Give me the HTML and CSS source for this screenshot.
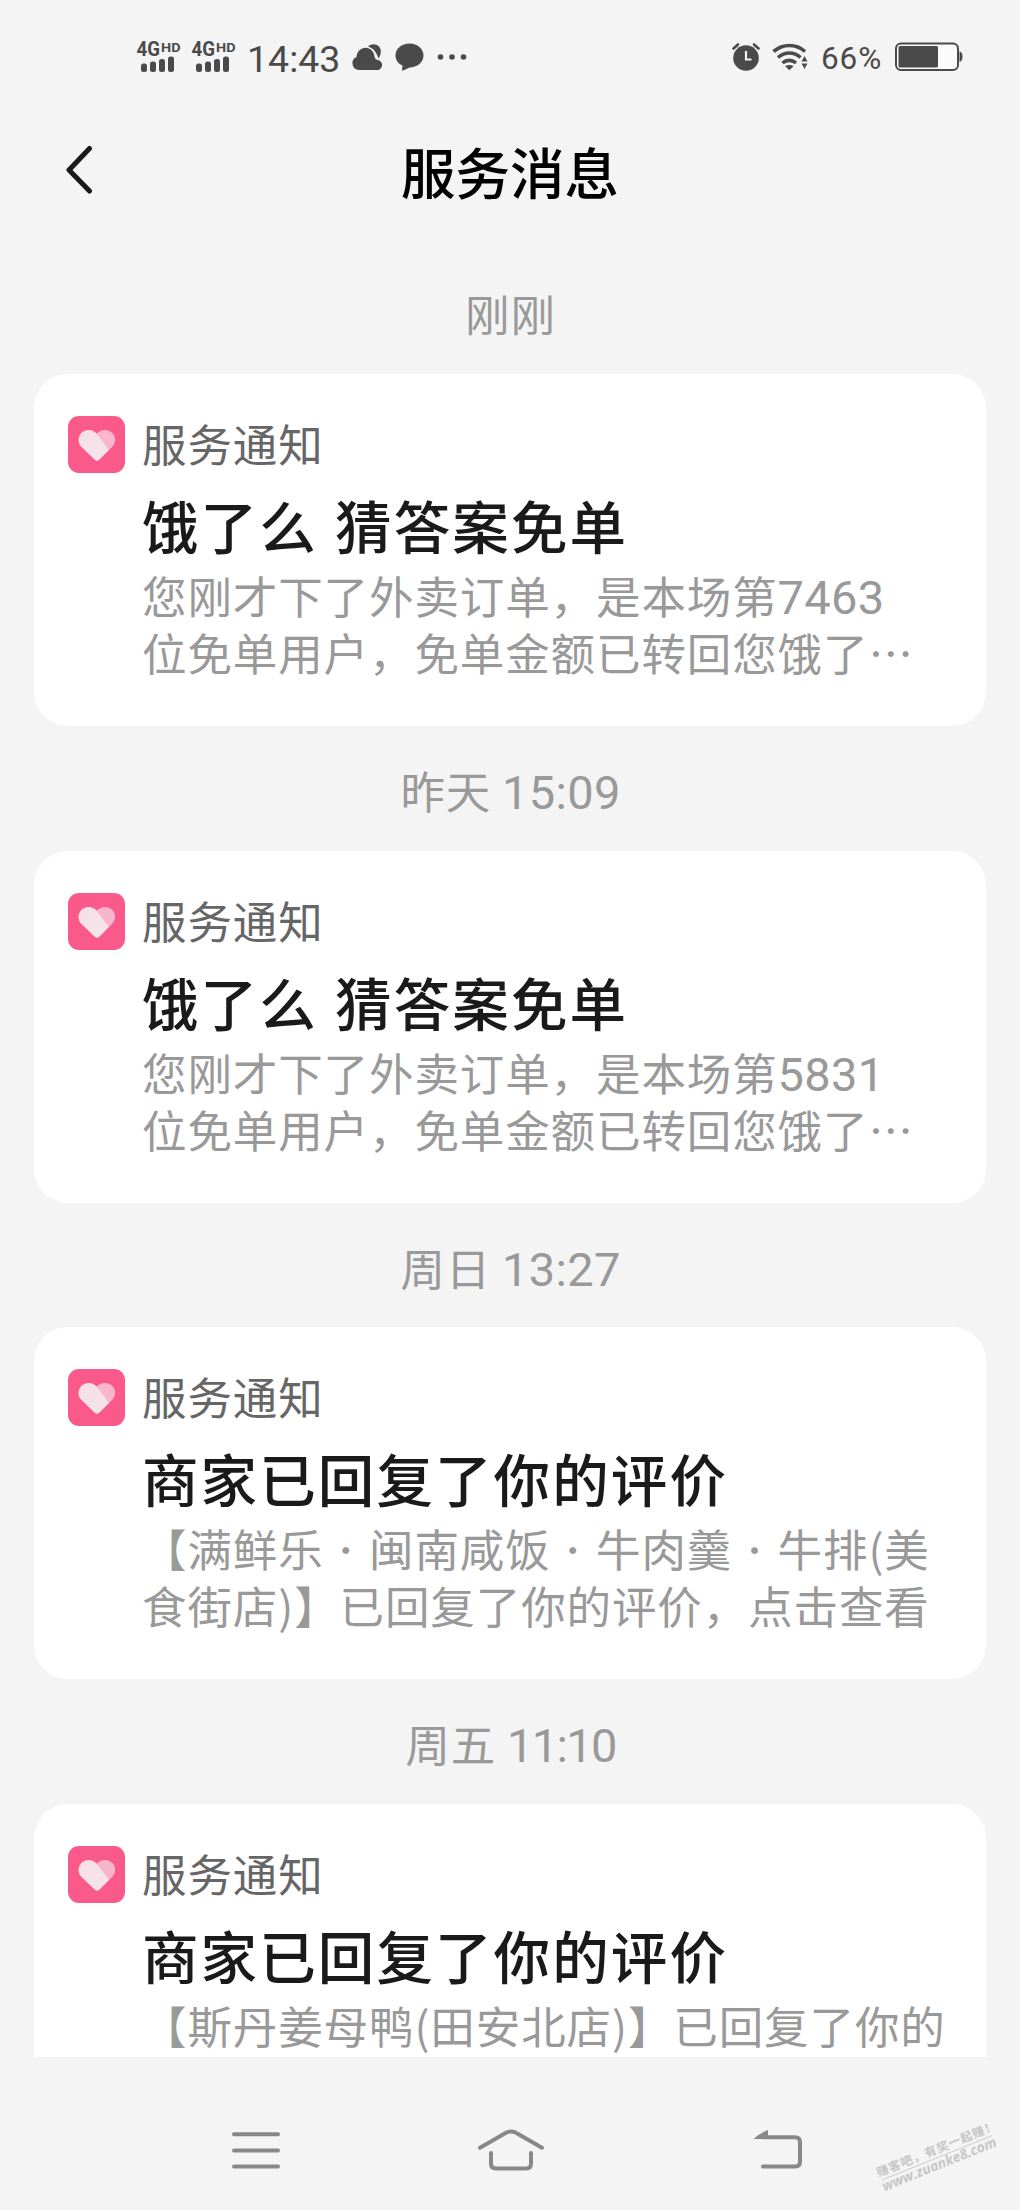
FILE: index.html
```html
<!DOCTYPE html>
<html lang="zh-CN">
<head>
<meta charset="utf-8">
<title>服务消息</title>
<link rel="stylesheet" href="styles.css">
</head>
<body>
<svg class="defs" width="0" height="0" aria-hidden="true">
  <defs>
    <linearGradient id="heart-fill" x1="0" y1="0" x2="1" y2="1">
      <stop offset="0" stop-color="#f6dfe7"/>
      <stop offset="1" stop-color="#f3e6ea"/>
    </linearGradient>
    <symbol id="heart" viewBox="0 0 57 57">
      <rect width="57" height="57" rx="11" fill="#fa5a8b"/>
      <path d="M29 17.5C32 14 38 12.500 42.500 15.500C48 19 48.500 26 44.500 30.500L41 34L26.500 20Z" fill="#f9b5cb"/>
      <path d="M29 18C25.500 13.500 19 12.500 14.500 16C9.500 20 9.500 26.500 13 30.500L26.500 43.500Q29 46 31.500 43.500L41 34Z" fill="url(#heart-fill)"/>
    </symbol>
    <symbol id="signal" viewBox="0 0 46 32">
      <text x="0.500" y="15" class="net" font-size="19.500" textLength="23.500" lengthAdjust="spacingAndGlyphs">4G</text>
      <text x="25" y="11" class="net" font-size="13.500" textLength="19.500" lengthAdjust="spacingAndGlyphs">HD</text>
      <rect x="5" y="22.500" width="6" height="8.500" rx="2.500"/>
      <rect x="14" y="20.500" width="6" height="10.500" rx="2.500"/>
      <rect x="23" y="18" width="6" height="13" rx="2.500"/>
      <rect x="32" y="15.500" width="6" height="15.500" rx="2.500"/>
    </symbol>
  </defs>
</svg>
<div class="phone">
  <div class="status">
    <svg class="sig" width="46" height="32"><use href="#signal"/></svg>
    <svg class="sig sig-second" width="46" height="32"><use href="#signal"/></svg>
    <span class="clock">14:43</span>
    <svg class="cloud" width="30" height="28" viewBox="0 0 30 28">
      <path d="M16 3.500C19 .5 24 .3 27 3.500C30 7 29 12 26.500 15.500C24.500 9.500 21.500 5 16 3.500Z"/>
      <path d="M7 27A6.800 6.800 0 0 1 4.500 14C5 8 9.500 4.500 14 4.800C19 5.200 22 9 22.500 13.500C23 15.800 24 16.800 26 17A5 5 0 0 1 24 27Z"/>
    </svg>
    <svg class="bubble" width="29" height="28" viewBox="0 0 29 28">
      <path d="M14.500 .5C22.500 .5 28.500 5.500 28.500 12.500C28.500 19.500 22 24.500 14.500 24.500C11.500 25.500 9.500 27.500 7 27.700L7.500 22.500C3 20.500 .5 17 .5 12.500C.5 5.500 6.500 .5 14.500 .5Z"/>
    </svg>
    <svg class="dots" width="30" height="8" viewBox="0 0 30 8">
      <circle cx="3.500" cy="4" r="2.800"/><circle cx="15" cy="4" r="2.800"/><circle cx="26.500" cy="4" r="2.800"/>
    </svg>
    <svg class="alarm" width="28" height="28" viewBox="0 0 28 28">
      <circle cx="14" cy="15" r="12.800"/>
      <path d="M1.500 5.500L6 1.500M26.500 5.500L22 1.500" stroke="#4a4a4a" stroke-width="2.600" stroke-linecap="round"/>
      <path d="M14 8V16.500H19.500" fill="none" stroke="#f4f4f4" stroke-width="2.200"/>
    </svg>
    <svg class="wifi" width="36" height="28" viewBox="0 0 36 28">
      <g fill="none" stroke="#4a4a4a" stroke-width="3.600">
        <path d="M1.500 8.500C11 .5 24 .5 33 8.500"/>
        <path d="M6 14.500C13 8.500 22 8.500 28.500 14.500"/>
        <path d="M10.500 20C14.500 16.500 20 16.500 24 20"/>
      </g>
      <path d="M13.200 23.200C15.500 21.600 19 21.600 21.500 23.200L17.400 27.300Z"/>
      <path d="M32.500 13L35.500 18.500H29.500ZM29.500 20.500H35.500L32.500 26Z"/>
    </svg>
    <span class="percent">66%</span>
    <svg class="battery" width="68" height="30" viewBox="0 0 68 30">
      <rect x="1" y="1.500" width="62" height="26.500" rx="5" fill="#fbfbfb" stroke="#4a4a4a" stroke-width="2"/>
      <rect x="3.500" y="4" width="39.500" height="21.500" rx="1.500"/>
      <path d="M64.500 9.500Q67.500 10 67.500 14.500Q67.500 19 64.500 20Z"/>
    </svg>
  </div>

  <header class="titlebar">
    <svg class="back" width="28" height="50" viewBox="0 0 28 50">
      <path d="M24.500 3.500L4 25L24.500 46" fill="none" stroke="#1a1a1a" stroke-width="5" stroke-linecap="round" stroke-linejoin="round"/>
    </svg>
    <h1 class="title">服务消息</h1>
  </header>

  <main class="list">
    <div class="time">刚刚</div>
    <article class="card">
      <div class="sender"><svg width="57" height="57"><use href="#heart"/></svg><span>服务通知</span></div>
      <h2 class="subject">饿了么 猜答案免单</h2>
      <p class="body">您刚才下了外卖订单，是本场第<span class="num">7463</span><br>位免单用户，免单金额已转回您饿了…</p>
    </article>
    <div class="time">昨天 <span class="num">15:09</span></div>
    <article class="card">
      <div class="sender"><svg width="57" height="57"><use href="#heart"/></svg><span>服务通知</span></div>
      <h2 class="subject">饿了么 猜答案免单</h2>
      <p class="body">您刚才下了外卖订单，是本场第<span class="num">5831</span><br>位免单用户，免单金额已转回您饿了…</p>
    </article>
    <div class="time">周日 <span class="num">13:27</span></div>
    <article class="card">
      <div class="sender"><svg width="57" height="57"><use href="#heart"/></svg><span>服务通知</span></div>
      <h2 class="subject">商家已回复了你的评价</h2>
      <p class="body">【满鲜乐<span class="dot">·</span>闽南咸饭<span class="dot">·</span>牛肉羹<span class="dot">·</span>牛排(美<br>食街店)】已回复了你的评价，点击查看</p>
    </article>
    <div class="time">周五 <span class="num tight">11:10</span></div>
    <article class="card">
      <div class="sender"><svg width="57" height="57"><use href="#heart"/></svg><span>服务通知</span></div>
      <h2 class="subject">商家已回复了你的评价</h2>
      <p class="body">【斯丹姜母鸭(田安北店)】已回复了你的</p>
    </article>
  </main>

  <nav class="nav">
    <svg width="48" height="42" viewBox="0 0 48 42">
      <path d="M2 5.300H46M2 21.500H46M2 37.500H46"/>
    </svg>
    <svg width="66" height="42" viewBox="0 0 66 42">
      <path d="M2 18.700L28.500 3.600Q33 1.200 37.500 3.600L64 18.700M13 24V34.500Q13 39.500 18 39.500H48Q53 39.500 53 34.500V24"/>
    </svg>
    <svg width="48" height="42" viewBox="0 0 48 42">
      <path d="M9 8.300H41Q46 8.300 46 13.300V32.500Q46 37.500 41 37.500H9"/>
      <path class="solid" d="M0 9.500Q7 3.500 14 1V10H1Q-.5 10 0 9.500Z"/>
    </svg>
  </nav>

  <svg class="watermark" width="150" height="86" viewBox="870 2120 150 86">
    <g transform="translate(882 2180) rotate(-22)" fill="#c6c6c6">
      <text class="wm-cn" x="-2" y="-4" textLength="128">赚客吧，有奖一起赚！</text>
      <path d="M0 0H119" stroke="#cfcfcf" stroke-width="1"/>
      <text class="wm-url" x="-2" y="11.500" textLength="122" lengthAdjust="spacingAndGlyphs">www.zuanke8.com</text>
    </g>
  </svg>
</div>
</body>
</html>
```
FILE: styles.css
```css
* { box-sizing: border-box; margin: 0; padding: 0; }

body {
  background: #f4f4f4;
  font-family: "Noto Sans CJK SC", sans-serif;
}

svg { display: block; flex: none; }
.defs { position: absolute; }

.phone {
  position: relative;
  display: flex;
  flex-direction: column;
  width: 1020px;
  height: 2210px;
  overflow: hidden;
}

/* status bar */
.status {
  display: flex;
  align-items: center;
  flex: none;
  height: 114px;
  padding: 0 57px 0 136px;
  color: #4a4a4a;
  fill: #4a4a4a;
  font-family: Roboto, sans-serif;
}
.net { font-family: Roboto, sans-serif; font-weight: 700; }
.sig-second { margin-left: 9px; }
.clock {
  width: 95px;
  margin: 4px 0 0 10px;
  font-size: 37.500px;
  line-height: 40px;
}
.cloud { margin-left: 10px; }
.bubble { margin-left: 13px; }
.dots { margin-left: 13px; }
.alarm { margin-left: auto; }
.wifi { margin-left: 12px; }
.percent {
  width: 62px;
  margin: 3px 0 0 13px;
  font-size: 31.500px;
  letter-spacing: .9px;
  line-height: 36px;
}
.battery { margin-left: 12px; }

/* title bar */
.titlebar {
  display: grid;
  grid-template-columns: 100px 1fr 100px;
  align-items: center;
  flex: none;
  height: 116px;
}
.back { margin: 0 0 4px 65px; }
.title {
  margin-bottom: 3px;
  text-align: center;
  font-size: 54.500px;
  font-weight: 500;
  line-height: 80px;
  color: #000;
}

/* message list */
.list {
  flex: none;
  height: 1827px;
  padding: 19.300px 34px 0;
  overflow: hidden;
}
.time {
  height: 124.700px;
  padding: 4px 0 0 1px;
  text-align: center;
  font-size: 44.500px;
  letter-spacing: .9px;
  line-height: 120px;
  white-space: nowrap;
  color: #999;
}
.num {
  font-family: Roboto, "Noto Sans CJK SC", sans-serif;
  font-size: 47px;
  letter-spacing: .3px;
  line-height: 1;
}
.tight { letter-spacing: -1.700px; }
.card {
  height: 352px;
  padding: 42px 34px 0;
  border-radius: 34px;
  background: #fff;
  white-space: nowrap;
}
.sender {
  display: flex;
  align-items: center;
  gap: 17px;
  height: 57px;
  font-size: 44.500px;
  letter-spacing: .9px;
  line-height: 57px;
  color: #666;
}
.sender span { margin-bottom: 4px; }
.subject {
  margin: 16px 0 0 74px;
  font-size: 56.500px;
  font-weight: 500;
  letter-spacing: 2.100px;
  word-spacing: 2.500px;
  line-height: 70px;
  color: #1a1a1a;
}
.body {
  margin: 7px 0 0 74px;
  font-size: 44.500px;
  letter-spacing: .9px;
  line-height: 57px;
  color: #999;
}
.dot {
  display: inline-block;
  width: 45.400px;
  text-align: center;
  font-size: 32px;
  line-height: 32px;
  vertical-align: 4.500px;
}

/* system navigation */
.nav {
  display: flex;
  align-items: center;
  flex: 1;
  padding: 33px 0 0 232px;
}
.nav path {
  fill: none;
  stroke: #888;
  stroke-width: 4px;
  stroke-linecap: round;
  stroke-linejoin: round;
}
.nav .solid { fill: #888; stroke: none; }
.nav svg:nth-child(2) { margin-left: 198px; }
.nav svg:nth-child(3) { margin-left: 210px; }

.watermark {
  position: absolute;
  right: 0;
  bottom: 4px;
}
.wm-cn { font: 700 12px "Noto Sans CJK SC", sans-serif; }
.wm-url { font: italic 700 14px "Open Sans", sans-serif; }
```
